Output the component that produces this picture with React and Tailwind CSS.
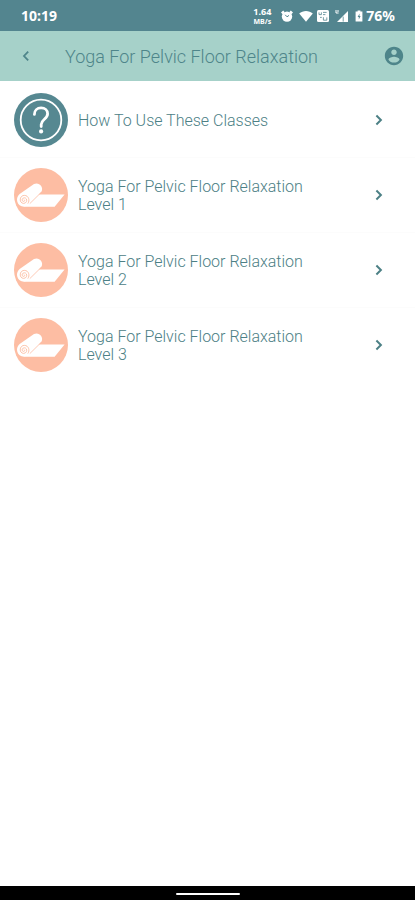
import React from 'react';

const classes = [
    { id: 1, title: ['How To Use These Classes'], icon: 'help' },
    { id: 2, title: ['Yoga For Pelvic Floor Relaxation', 'Level 1'], icon: 'mat' },
    { id: 3, title: ['Yoga For Pelvic Floor Relaxation', 'Level 2'], icon: 'mat' },
    { id: 4, title: ['Yoga For Pelvic Floor Relaxation', 'Level 3'], icon: 'mat' },
];

function StatusBar() {
    return (
        <div className="flex h-[31px] items-center justify-between bg-[#53858f] px-5 pt-px text-white">
            <span className="pl-px font-['Noto_Sans',sans-serif] text-sm font-bold">10:19</span>
            <div className="flex items-center">
                {/* Network speed */}
                <div className="mr-2 flex flex-col items-center font-['Noto_Sans',sans-serif] font-bold">
                    <span className="text-[9px] leading-[10px]">1.64</span>
                    <span className="text-[7px] leading-[9px]">MB/s</span>
                </div>
                {/* Alarm */}
                <svg className="mr-[3px] h-4 w-4" viewBox="0 0 16 16" fill="none">
                    <circle cx="8" cy="8.6" r="5.2" fill="currentColor" />
                    <path d="M2.8 5.4 5 3.4M13.2 5.4 11 3.4" stroke="currentColor" strokeWidth="2.4" />
                    <path d="M6.2 6.8 8 8.8l2-1.4" stroke="#53858f" strokeWidth="1" />
                </svg>
                {/* Wifi */}
                <svg className="mr-px h-4 w-4" viewBox="0 0 16 16" fill="currentColor">
                    <path d="M1.2 5.6C5 2.2 11 2.2 14.8 5.6L8 13.8z" />
                </svg>
                {/* VoWiFi */}
                <svg className="mr-[3px] h-4 w-4" viewBox="0 0 16 16" fill="none">
                    <rect x="2" y="2" width="12" height="12" rx="1.5" fill="currentColor" />
                    <path d="M4 4.4v2.2h2.4V4.4M8 4.4h3.6M8 6.6h2.4M5 9.4h1.8M8.4 9.2v3h3.4V9.4" stroke="#53858f" strokeWidth=".8" />
                </svg>
                {/* Signal */}
                <svg className="mr-[5px] h-4 w-4" viewBox="0 0 16 16" fill="none">
                    <path d="M14 3v11H3z" fill="currentColor" />
                    <path d="M9.2 8.6v5" stroke="#53858f" strokeWidth=".8" />
                    <path d="M2 2v3h2.6M4 2v2" stroke="currentColor" strokeWidth="1" />
                </svg>
                {/* Battery */}
                <svg className="mr-[3px] h-3 w-2" viewBox="0 0 8 12">
                    <path d="M2.6.4h2.8v1.2H7.4v10H.6v-10h2z" fill="currentColor" />
                    <path d="M4.6 3.6 2.6 7h1.2v2.6L5.6 6H4.4z" fill="#53858f" />
                </svg>
                <span className="font-['Noto_Sans',sans-serif] text-sm font-bold">76%</span>
            </div>
        </div>
    );
}

function Header() {
    return (
        <header className="flex h-[50px] items-center bg-[#a6d1c9] pl-4 pr-[9px] text-[#4e858a]">
            <button type="button" aria-label="Back" className="flex h-6 w-5 items-center justify-center">
                <svg className="h-4 w-4" viewBox="0 0 16 16" fill="none" stroke="currentColor" strokeWidth="1.8">
                    <path d="M10.2 3.6 6 8l4.2 4.4" />
                </svg>
            </button>
            <h1 className="ml-[29px] flex-1 whitespace-nowrap pt-0.5 text-lg leading-6 font-light">Yoga For Pelvic Floor Relaxation</h1>
            <button type="button" aria-label="Account" className="flex h-6 w-6 items-center justify-center">
                <svg className="h-[22px] w-[22px]" viewBox="0 0 24 24" fill="currentColor">
                    <path d="M12 2C6.48 2 2 6.48 2 12s4.48 10 10 10 10-4.48 10-10S17.52 2 12 2zm0 3c1.66 0 3 1.34 3 3s-1.34 3-3 3-3-1.34-3-3 1.34-3 3-3zm0 14.2c-2.5 0-4.71-1.28-6-3.22.03-1.99 4-3.08 6-3.08 1.99 0 5.97 1.09 6 3.08-1.29 1.94-3.5 3.22-6 3.22z" />
                </svg>
            </button>
        </header>
    );
}

function HelpIcon() {
    return (
        <svg className="h-[54px] w-[54px] shrink-0" viewBox="0 0 54 54" fill="none">
            <circle cx="27" cy="27" r="27" fill="#568891" />
            <circle cx="27" cy="27" r="20.3" stroke="#fff" strokeWidth="1.8" />
            <path d="M20.4 21.4c0-4 2.8-6.5 6.7-6.5 3.8 0 6.5 2.3 6.5 5.8 0 5.4-6.4 5.6-6.4 10.8v2" stroke="#fff" strokeWidth="2.8" strokeLinecap="round" />
            <circle cx="27.1" cy="38.4" r="2.1" fill="#fff" />
        </svg>
    );
}

function MatIcon() {
    return (
        <svg className="h-[54px] w-[54px] shrink-0" viewBox="0 0 54 54" fill="none">
            <circle cx="27" cy="27" r="27" fill="#fdbda3" />
            {/* Flat part of the mat */}
            <path d="M24 26.6h26.6L40.6 38.8H9.5L14 36z" fill="#fff" />
            {/* Rolled part */}
            <path d="M5.6 26 20 16c5-2.2 9.6 2.8 7.6 7.4L15.4 36.6 10 38.8C2.8 38.6.8 30 5.6 26z" fill="#fff" />
            <path d="M27.8 23.8 15.8 35.6" stroke="#fdbda3" strokeWidth=".8" />
            {/* Spiral */}
            <path d="M13.8 35.6c2.4-3.2.8-8.2-3.4-8.2-5.2 0-5.6 7.8-.8 8 3.8 0 4.2-5.4.8-5.6-2.8 0-3 3.6-.8 3.6 1.2 0 1.4-1.4.6-1.8" stroke="#fdbda3" strokeWidth=".9" />
        </svg>
    );
}

function ClassRow({ item }) {
    return (
        <li className="border-b border-[#fcfcfc] last:border-b-0">
            <a href="#" className="flex h-[74px] items-center pl-[14px] pr-7">
                {item.icon === 'help' ? <HelpIcon /> : <MatIcon />}
                <span className="ml-[10px] flex-1 pt-0.5 text-base leading-[18px] font-light">
                    {item.title.map((line) => (
                        <span key={line} className="block">{line}</span>
                    ))}
                </span>
                <svg className="h-4 w-4 shrink-0" viewBox="0 0 16 16" fill="none" stroke="currentColor" strokeWidth="2">
                    <path d="M5.4 3.5 9.9 8l-4.5 4.5" />
                </svg>
            </a>
        </li>
    );
}

export default function App() {
    return (
        <div className="flex min-h-screen flex-col bg-white font-[Roboto,sans-serif]">
            <StatusBar />
            <Header />
            <main className="flex-1 pt-0.5">
                <ul className="text-[#4c8085]">
                    {classes.map((item) => (
                        <ClassRow key={item.id} item={item} />
                    ))}
                </ul>
            </main>
            {/* Gesture bar */}
            <div className="flex h-[14px] items-center justify-center bg-black pt-0.5">
                <div className="h-[2px] w-16 rounded-full bg-white" />
            </div>
        </div>
    );
}
